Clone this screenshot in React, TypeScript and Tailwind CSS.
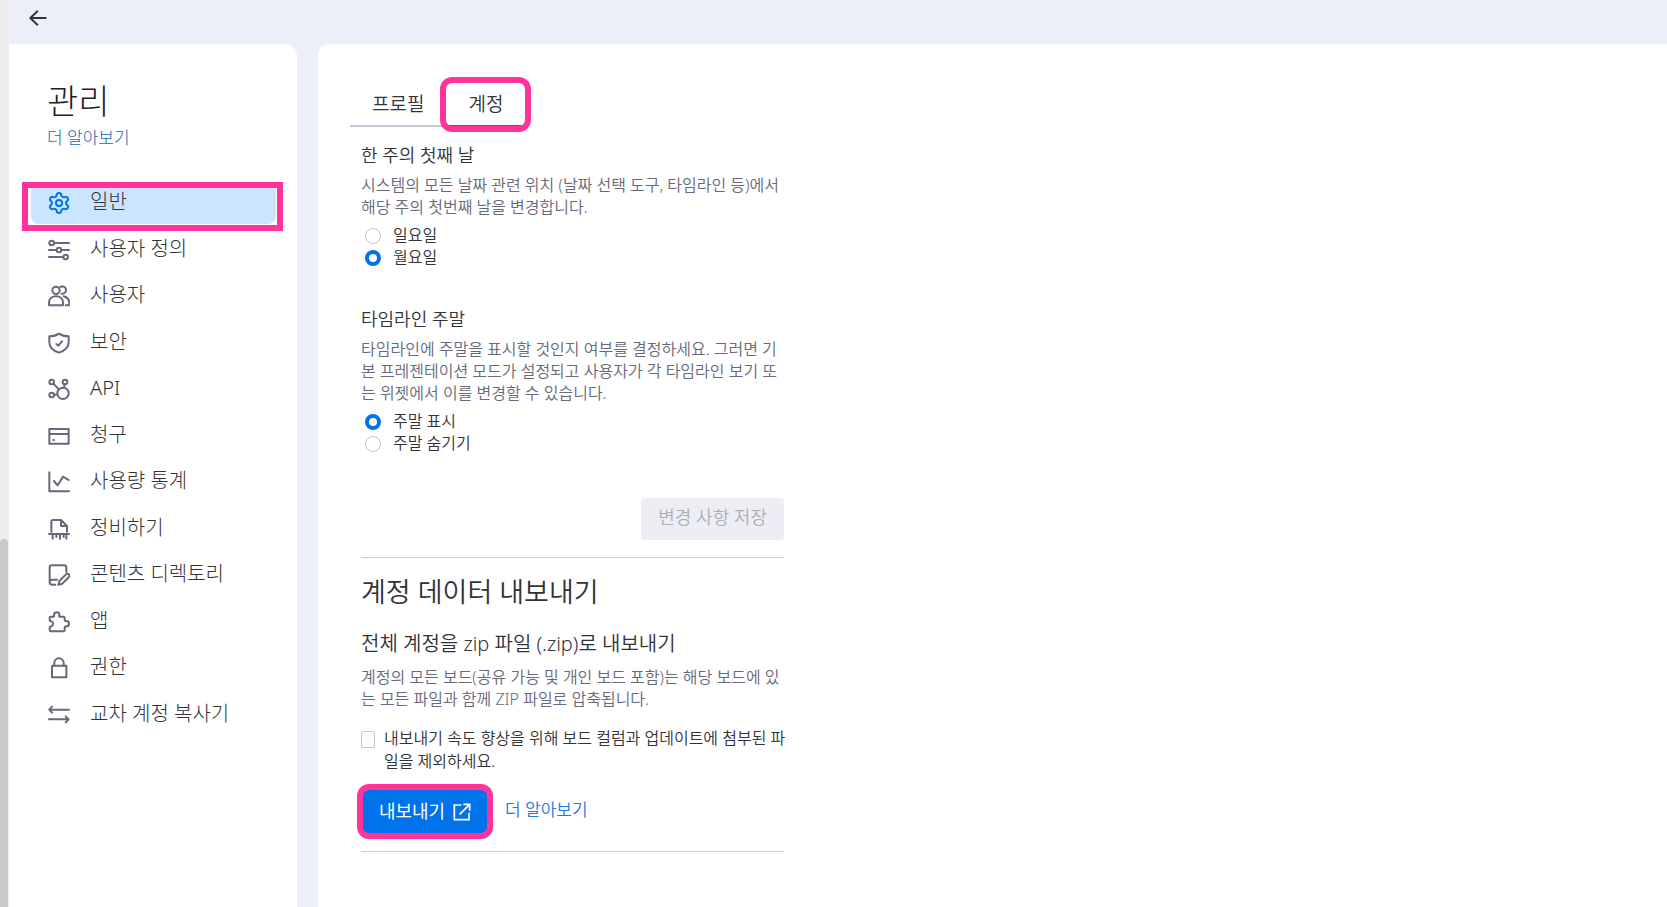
import React from "react";
import { Settings } from "lucide-react";

const icons = {
  customize: (
    <>
      <circle cx="11" cy="12" r="7" />
      <circle cx="33" cy="33" r="7" />
      <circle cx="53" cy="54" r="7" />
      <path d="M18 12H63M3 33H26M40 33H63M3 54H46" />
    </>
  ),
  users: (
    <>
      <circle cx="24" cy="16" r="11" />
      <path d="M3 61V54C3 41 12 34 24 34S45 41 45 54V61Z" />
      <path d="M37 6A11 11 0 1 1 41 26M47 34C58 37 64 45 64 55V61H53" />
    </>
  ),
  security: (
    <>
      <path d="M33 5C25 11 14 13 4 13V30C4 46 17 57 33 62C49 57 62 46 62 30V13C52 13 41 11 33 5Z" />
      <path d="M25 36L31 41L42 28" />
    </>
  ),
  api: (
    <>
      <circle cx="45" cy="46" r="17" />
      <circle cx="11" cy="12" r="7" />
      <circle cx="51" cy="12" r="7" />
      <circle cx="11" cy="51" r="7" />
      <path d="M16 17L33 34M50 19L48 29M18 51L28 49" />
    </>
  ),
  billing: (
    <>
      <path d="M4 12H62V56H4ZM4 27H62" />
      <path d="M16 45H18" />
    </>
  ),
  usage: <path d="M4 4V61H63M18 30L29 43L45 17L62 27" />,
  tidy: (
    <>
      <path d="M10 41V12Q10 6 16 6H39L57 24V41M39 6V24H57" />
      <path d="M3 48H63M14 48V62M25 48V57M36 48V62M47 48V57M55 48V62" />
    </>
  ),
  content: (
    <>
      <path d="M55 24V11Q55 4 48 4H12Q5 4 5 11V55Q5 62 12 62H22M5 54Q6 47 14 47H27" />
      <path d="M31 62L34 51L54 31A6 6 0 0 1 63 39L43 59Z" />
    </>
  ),
  apps: (
    <path d="M8 17H17C20 17 18 14 18 12A8 8 0 0 1 34 12C34 14 32 17 35 17H46Q50 17 50 21V27C50 31 53 29 55 30A8 8 0 0 1 55 46C53 47 50 45 50 49V57Q50 61 46 61H9Q5 61 5 57V50C5 46 8 47 10 46A8 8 0 0 0 10 31C8 30 5 31 5 27V20Q5 17 8 17Z" />
  ),
  permissions: (
    <>
      <path d="M12 26H55V61H12Z" />
      <path d="M19 26V18A14 14 0 0 1 47 18V26" />
    </>
  ),
  copier: <path d="M63 17H4M12 8L4 17L12 26M3 46H62M53 37L62 46L53 55" />,
};

const navItems: { label: string; icon?: React.ReactNode }[] = [
  { label: "일반" },
  { label: "사용자 정의", icon: icons.customize },
  { label: "사용자", icon: icons.users },
  { label: "보안", icon: icons.security },
  { label: "API", icon: icons.api },
  { label: "청구", icon: icons.billing },
  { label: "사용량 통계", icon: icons.usage },
  { label: "정비하기", icon: icons.tidy },
  { label: "콘텐츠 디렉토리", icon: icons.content },
  { label: "앱", icon: icons.apps },
  { label: "권한", icon: icons.permissions },
  { label: "교차 계정 복사기", icon: icons.copier },
];

const Sidebar = () => {
  return (
    <aside className="w-72 shrink-0 rounded-tr-xl bg-white pr-[21px] pl-[22px]">
      <header className="pt-8 pl-4">
        <h1 className="text-[34px] leading-[50px] font-light text-[#1f2024]">
          관리
        </h1>
        <a
          href="#learn"
          className="block text-[17px] leading-6 font-light text-[#1068b8]"
        >
          더 알아보기
        </a>
      </header>
      <nav className="mt-[30px]">
        <ul className="grid h-[558px] auto-rows-fr">
          {navItems.map((item, index: number) => {
            const active = index === 0;
            return (
              <li key={item.label} className="relative flex items-center">
                <a
                  href={"#" + item.label}
                  className={
                    active
                      ? "flex h-[42px] w-full items-center rounded-lg bg-[#cce5ff] pl-[17px]"
                      : "flex h-[42px] w-full items-center pl-[17px]"
                  }
                >
                  {active ? (
                    <Settings
                      className="-mx-px size-6 text-[#0073ea]"
                      strokeWidth={2}
                    />
                  ) : (
                    <svg
                      viewBox="0 0 66 66"
                      className="size-[22px] fill-none stroke-[#676879] stroke-6"
                      strokeLinecap="round"
                      strokeLinejoin="round"
                    >
                      {item.icon}
                    </svg>
                  )}
                  <span className="ml-5 pb-0.5 text-xl leading-7 font-light text-[#323338]">
                    {item.label}
                  </span>
                </a>
                {active && (
                  <div className="pointer-events-none absolute top-0.5 -right-[7px] -left-[9px] h-[49px] border-6 border-[#ff3399]" />
                )}
              </li>
            );
          })}
        </ul>
      </nav>
    </aside>
  );
};

type RadioGroupProps = {
  name: string;
  title: string;
  text: string;
  options: string[];
  selected: number;
};

const RadioGroup = ({
  name,
  title,
  text,
  options,
  selected,
}: RadioGroupProps) => {
  return (
    <fieldset>
      <legend className="text-lg leading-6 font-[350] text-[#323338]">
        {title}
      </legend>
      <p className="my-[7px] leading-[22px] font-[350] text-[#676879]">
        {text}
      </p>
      {options.map((option, index: number) => (
        <label
          key={option}
          className="flex h-[22px] items-center pl-1 leading-5 font-[350] text-[#323338]"
        >
          <input
            type="radio"
            name={name}
            defaultChecked={index === selected}
            className="mr-3 size-4 appearance-none rounded-full border border-[#c3c6d4] checked:border-4 checked:border-[#0073ea]"
          />
          <span className="pb-0.5">{option}</span>
        </label>
      ))}
    </fieldset>
  );
};

const Account = () => {
  return (
    <main className="flex-1 rounded-tl-xl bg-white pt-[38px] pl-8">
      <div role="tablist" className="flex h-[45px] font-[350]">
        <button
          role="tab"
          className="border-b-2 border-[#c3c6d4] px-[22px] pt-0.5 text-[19px] text-[#323338]"
        >
          프로필
        </button>
        <button
          role="tab"
          aria-selected="true"
          className="relative border-b-2 border-[#0073ea] px-[22px] pt-0.5 text-[19px] text-[#323338]"
        >
          계정
          <span className="pointer-events-none absolute -inset-x-1.5 -top-[5px] -bottom-[7px] rounded-xl border-6 border-[#ff3399]" />
        </button>
      </div>

      <div className="ml-[11px] w-[423px] pt-4">
        <RadioGroup
          name="week"
          title="한 주의 첫째 날"
          text="시스템의 모든 날짜 관련 위치 (날짜 선택 도구, 타임라인 등)에서 해당 주의 첫번째 날을 변경합니다."
          options={["일요일", "월요일"]}
          selected={1}
        />
        <div className="mt-[38px]">
          <RadioGroup
            name="weekend"
            title="타임라인 주말"
            text="타임라인에 주말을 표시할 것인지 여부를 결정하세요. 그러면 기본 프레젠테이션 모드가 설정되고 사용자가 각 타임라인 보기 또는 위젯에서 이를 변경할 수 있습니다."
            options={["주말 표시", "주말 숨기기"]}
            selected={0}
          />
        </div>
        <div className="mt-[43px] flex justify-end">
          <button
            disabled
            className="h-[42px] rounded-sm bg-[#ecedf5] px-[17px] pb-1 text-lg font-[350] text-[#acadb5]"
          >
            변경 사항 저장
          </button>
        </div>

        <section className="mt-[17px] border-y border-[#c9cbdb] pt-4 pb-[18px]">
          <h2 className="text-[27px] leading-9 font-[350] text-[#323338]">
            계정 데이터 내보내기
          </h2>
          <h3 className="mt-5 text-xl leading-7 font-[350] text-[#323338]">
            전체 계정을 zip 파일 (.zip)로 내보내기
          </h3>
          <p className="mt-2 leading-[22px] font-[350] text-[#676879]">
            계정의 모든 보드(공유 가능 및 개인 보드 포함)는 해당 보드에 있는
            모든 파일과 함께 ZIP 파일로 압축됩니다.
          </p>
          <label className="mt-[17px] -mr-1 flex items-start leading-[23px] font-[350] text-[#323338]">
            <input
              type="checkbox"
              className="mt-1 mr-[9px] h-[17px] w-3.5 shrink-0 appearance-none rounded-xs border border-[#c3c6d4]"
            />
            내보내기 속도 향상을 위해 보드 컬럼과 업데이트에 첨부된 파일을
            제외하세요.
          </label>
          <div className="mt-[17px] flex items-center">
            <button className="relative ml-0.5 flex h-[43px] w-[124px] items-center justify-center gap-2 rounded-sm bg-[#0073ea] text-lg text-white">
              <span className="pb-0.5">내보내기</span>
              <svg
                viewBox="0 0 54 54"
                className="size-[18px] fill-none stroke-white stroke-5"
              >
                <path d="M25 6H4V50H48V29M20 34L50 4M31 4H50V23" />
              </svg>
              <span className="pointer-events-none absolute -inset-1.5 rounded-xl border-6 border-[#ff3399]" />
            </button>
            <a
              href="#export"
              className="ml-[18px] pb-1 text-[17px] font-[350] text-[#1f76db]"
            >
              더 알아보기
            </a>
          </div>
        </section>
      </div>
    </main>
  );
};

const App = () => {
  return (
    <div className="flex min-h-screen bg-[#eceff8] font-['Noto_Sans','Noto_Sans_CJK_KR',sans-serif]">
      {/* scroll track */}
      <div className="flex w-[9px] shrink-0 flex-col justify-end bg-[#eeeeee]">
        <div className="h-[368px] w-2 rounded-t-full bg-[#c9c9c9]" />
      </div>
      <div className="flex flex-1 flex-col">
        <header className="flex h-11 items-start pt-2 pl-5">
          <button aria-label="뒤로">
            <svg
              viewBox="0 0 54 60"
              className="h-5 w-[18px] fill-none stroke-[#323338] stroke-6"
              strokeLinecap="round"
              strokeLinejoin="round"
            >
              <path d="M50 30H4M25 10L4 30L25 50" />
            </svg>
          </button>
        </header>
        <div className="flex flex-1 gap-[21px]">
          <Sidebar />
          <Account />
        </div>
      </div>
    </div>
  );
};

export default App;
